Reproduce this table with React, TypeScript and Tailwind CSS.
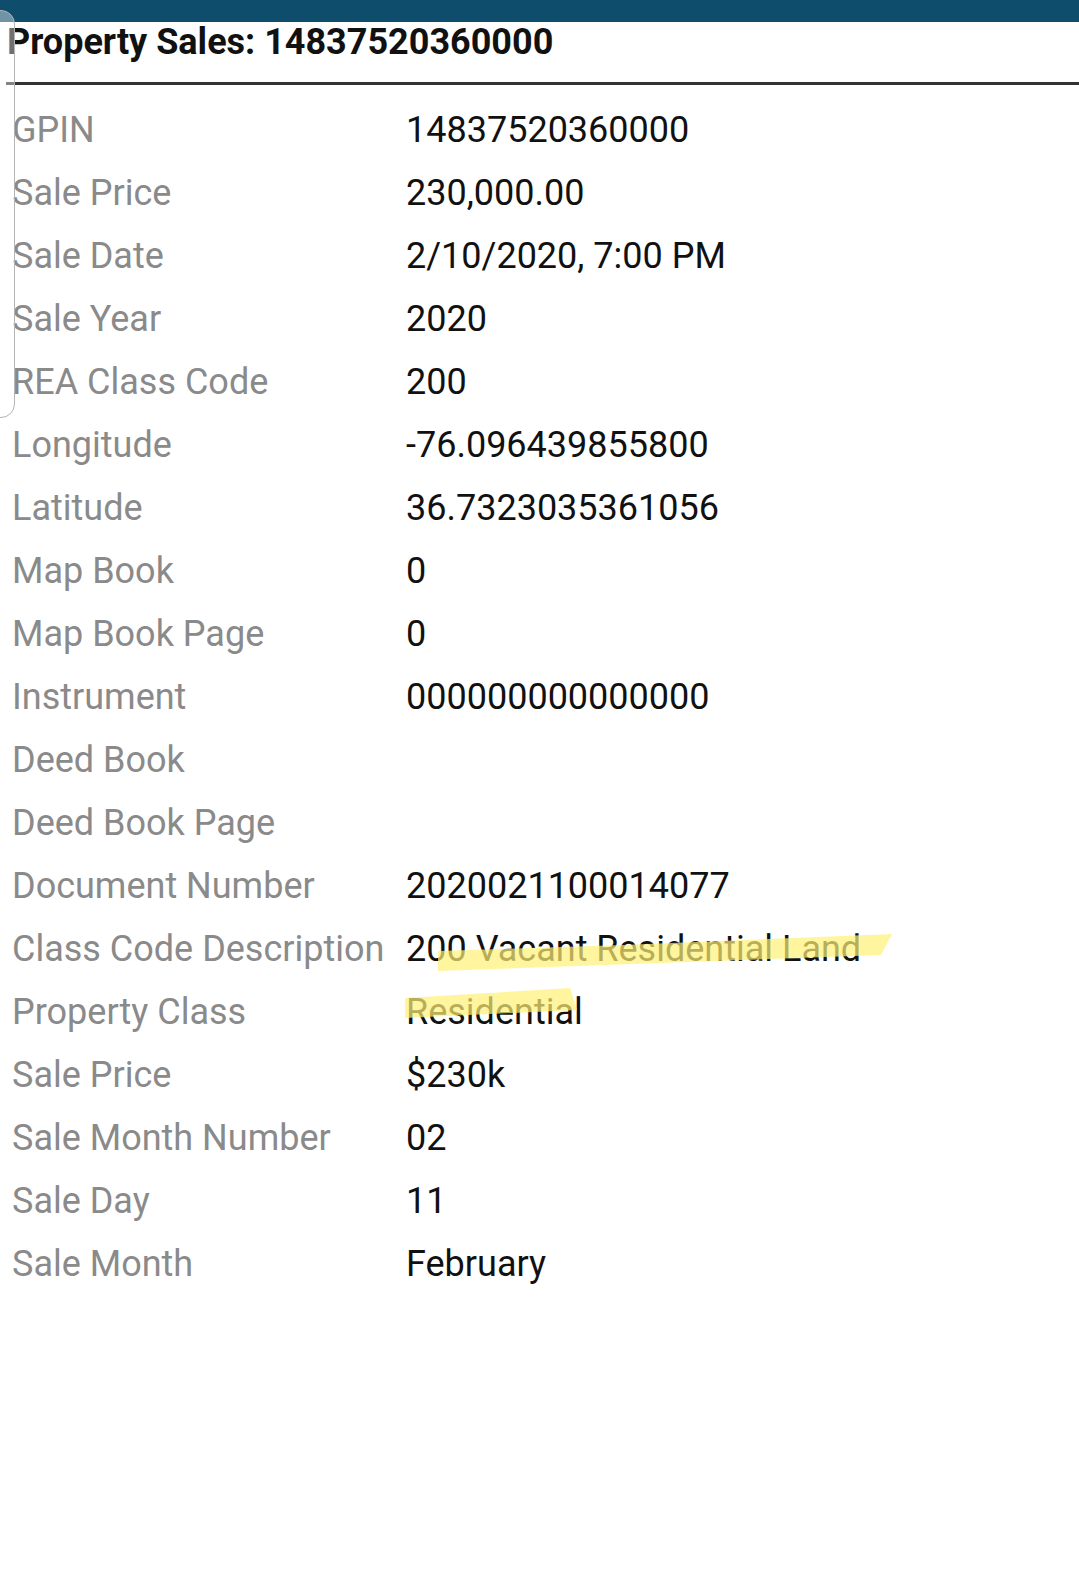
const ROWS: [string, string][] = [
  ["GPIN", "14837520360000"],
  ["Sale Price", "230,000.00"],
  ["Sale Date", "2/10/2020, 7:00 PM"],
  ["Sale Year", "2020"],
  ["REA Class Code", "200"],
  ["Longitude", "-76.096439855800"],
  ["Latitude", "36.7323035361056"],
  ["Map Book", "0"],
  ["Map Book Page", "0"],
  ["Instrument", "000000000000000"],
  ["Deed Book", ""],
  ["Deed Book Page", ""],
  ["Document Number", "2020021100014077"],
  ["Class Code Description", "200 Vacant Residential Land"],
  ["Property Class", "Residential"],
  ["Sale Price", "$230k"],
  ["Sale Month Number", "02"],
  ["Sale Day", "11"],
  ["Sale Month", "February"],
];

export default function App() {
  return (
    <div className="relative min-h-[1588px] w-[1079px] overflow-hidden bg-white font-['Roboto',sans-serif]">
      <div className="h-[22px] bg-[#0e4d6b]" />

      <h1 className="pl-[7px] text-[36px] font-bold leading-[40px] text-[#111]">
        Property Sales: 14837520360000
      </h1>

      <div className="ml-[6px] mt-[20px] h-[3px] bg-[#333]" />

      <div className="grid grid-cols-[394px_1fr] pl-[12px] pt-[14px] text-[36px] leading-[63px]">
        {ROWS.map(([label, value], i) => (
          <div key={i} className="contents">
            <div className="text-[#8a8a8a]">{label}</div>
            <div className="text-[#111]">{value || "\u00a0"}</div>
          </div>
        ))}
      </div>

      {/* side sheet edge */}
      <div className="absolute left-[-20px] top-[10px] h-[408px] w-[35px] rounded-r-[14px] border-[1.5px] border-[#b4b4b4] bg-white/40" />

      {/* marker strokes */}
      <svg className="pointer-events-none absolute left-0 top-0" width="1079" height="1588">
        <polygon points="438,951 623,945 892,934 881,955 438,971" fill="#fff176" fillOpacity="0.7" />
        <polygon points="405,998 570,988 577,1010 405,1018" fill="#fff176" fillOpacity="0.7" />
      </svg>
    </div>
  );
}
